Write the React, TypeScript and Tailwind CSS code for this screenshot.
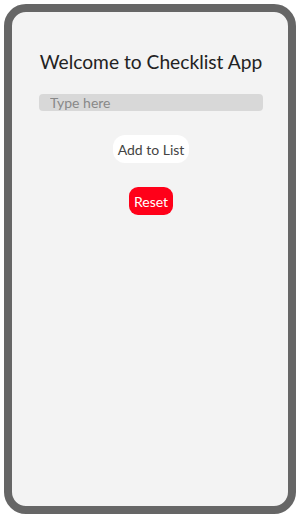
import React, { useState } from "react";

export default function App() {
  const [text, setText] = useState("");

  return (
    <div className="w-[300px] h-[518px] p-1 bg-white" style={{ fontFamily: '"Lato", "Noto Sans", sans-serif' }}>
      <div className="h-full w-full rounded-[22px] border-8 border-[#666666] bg-[#f3f3f3] flex flex-col items-center">
        {/* Title */}
        <h1 className="mt-[36px] ml-[2px] text-[19.2px] leading-[28px] text-[#222]">
          Welcome to Checklist App
        </h1>
        {/* Input */}
        <input
          value={text}
          onChange={(e) => setText(e.target.value)}
          placeholder="Type here"
          className="mt-[18px] ml-[2px] w-[224px] h-[17px] rounded-[4px] bg-[#d8d8d8] px-[11px] text-[14px] text-[#333] placeholder:text-[#888] outline-none"
        />
        {/* Buttons */}
        <button className="mt-[24px] ml-[2px] h-[28px] px-[5px] rounded-[12px] bg-white text-[14px] text-[#444]">
          Add to List
        </button>
        <button className="mt-[24px] ml-[2px] h-[28px] px-[5px] rounded-[9px] bg-[#ff0019] text-[14px] text-white">
          Reset
        </button>
      </div>
    </div>
  );
}
